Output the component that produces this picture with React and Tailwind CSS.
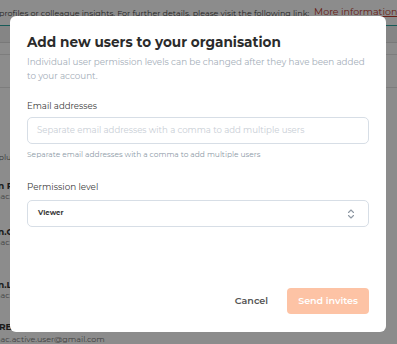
import React from "react";

export default function App() {
  return (
    <div className="relative w-[397px] h-[344px] overflow-hidden bg-white font-['Montserrat','DejaVu_Sans',sans-serif]">
      {/* PAGE BEHIND */}
      <div className="flex flex-col">
        <div className="h-[26px] border-b border-[#2aa7a0] flex items-center text-[8px] text-[#444] whitespace-nowrap -ml-[1px]">
          profiles or colleague insights. For further details, please visit the following link:{" "}
          <span className="ml-[5px] text-[9.5px] text-[#c0392b] underline">More information</span>
        </div>
        <div className="h-[17px] bg-[#f3f3f3] border-b border-[#dcdcdc]" />
        <div className="h-[12px] border-b border-[#e3e3e3]" />
        <div className="h-[33px] border-b border-[#e3e3e3]" />
        <div className="flex flex-col text-[8px] text-[#333] leading-[11px]">
          <div className="mt-[64px] text-[#666] -ml-[22px]">Multiplu</div>
          <div className="mt-[17px] font-bold text-[9px] -ml-[19px]">John R</div>
          <div className="text-[#777] -ml-[8px]">mac.</div>
          <div className="mt-[24px] font-bold text-[9px] -ml-[19px]">John.C</div>
          <div className="text-[#777] -ml-[8px]">mac.</div>
          <div className="mt-[31px] font-bold text-[9px] -ml-[19px]">John.L</div>
          <div className="text-[#777] -ml-[8px]">mac.</div>
          <div className="mt-[20px] font-bold text-[9px] -ml-[1px]">RB</div>
          <div className="text-[#777] mt-[2px] -ml-[8px]">mac.active.user@gmail.com</div>
        </div>
      </div>

      {/* OVERLAY */}
      <div className="absolute inset-0 bg-black/45" />

      {/* MODAL */}
      <div className="absolute left-[10px] top-[16px] w-[376px] h-[316px] bg-white rounded-[6px] px-[17px] pt-[17px] pb-[18px] flex flex-col">
        <h2 className="text-[13.6px] font-bold text-[#2b2b2b] leading-[18px]">
          Add new users to your organisation
        </h2>
        <p className="mt-[4px] text-[8.75px] leading-[14px] text-[#a3adb8]">
          Individual user permission levels can be changed after they have been added to your account.
        </p>

        <label className="mt-[17px] text-[8.6px] text-[#3a3a3a] leading-[12px]">Email addresses</label>
        <div className="mt-[5px] h-[27px] border border-[#d7dee6] rounded-[5px] flex items-center px-[9px] text-[8.6px] text-[#c8ced5]">
          Separate email addresses with a comma to add multiple users
        </div>
        <div className="mt-[6px] text-[7.5px] text-[#8d9aa7] leading-[10px]">
          Separate email addresses with a comma to add multiple users
        </div>

        <label className="mt-[21px] text-[8.8px] text-[#3a3a3a] leading-[12px]">Permission level</label>
        <div className="mt-[7px] h-[27px] border border-[#d7dee6] rounded-[5px] flex items-center justify-between pl-[10px] pr-[13px]">
          <span className="text-[7px] font-bold text-[#3a3a3a]">Viewer</span>
          <svg width="8" height="12" viewBox="0 0 8 12" fill="none" stroke="#8e98a3" strokeWidth="1.1" strokeLinecap="round" strokeLinejoin="round">
            <path d="M1.5 4.5 L4 2 L6.5 4.5" />
            <path d="M1.5 7.5 L4 10 L6.5 7.5" />
          </svg>
        </div>

        <div className="mt-auto flex items-center justify-end gap-[19px]">
          <button className="text-[9.5px] font-semibold text-[#555]">Cancel</button>
          <button className="h-[26px] w-[82px] rounded-[4px] bg-[#fdc3a5] text-white text-[9.5px] font-semibold">
            Send invites
          </button>
        </div>
      </div>
    </div>
  );
}
